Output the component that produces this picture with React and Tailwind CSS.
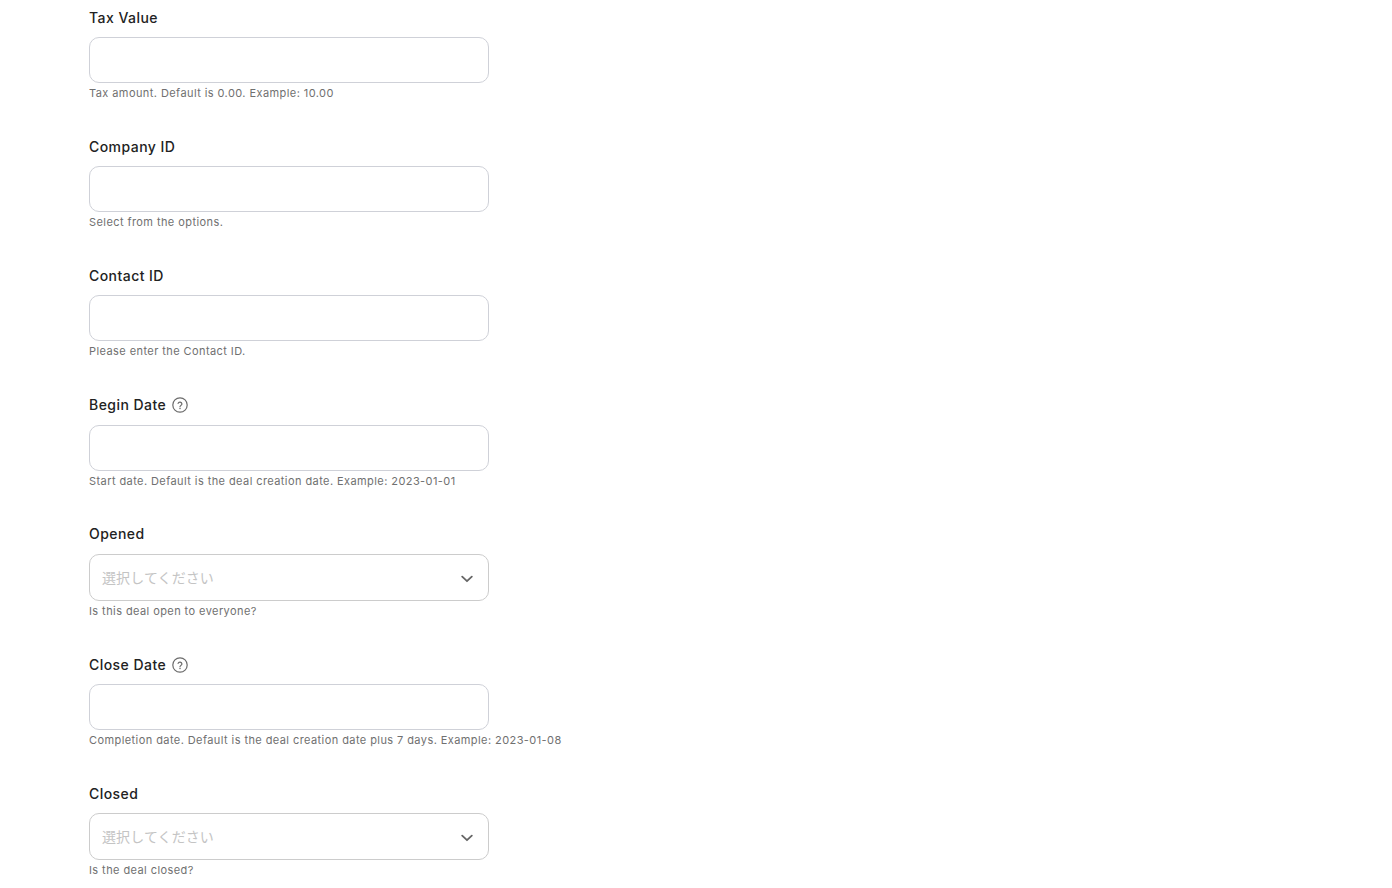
const fields = [
  { label: 'Tax Value', hint: 'Tax amount. Default is 0.00. Example: 10.00' },
  { label: 'Company ID', hint: 'Select from the options.' },
  { label: 'Contact ID', hint: 'Please enter the Contact ID.' },
  { label: 'Begin Date', help: true, rowClass: 'h-5 mb-[10px]', fieldClass: 'mb-[35px]', hint: 'Start date. Default is the deal creation date. Example: 2023-01-01' },
  { label: 'Opened', select: true, rowClass: 'h-5 mb-[10px]', hint: 'Is this deal open to everyone?' },
  { label: 'Close Date', help: true, hint: 'Completion date. Default is the deal creation date plus 7 days. Example: 2023-01-08' },
  { label: 'Closed', select: true, hint: 'Is the deal closed?' },
];

function HelpIcon() {
  return (
    <svg width="16" height="16" viewBox="0 0 16 16" fill="none" className="ml-[6px] text-[#6b6b6b]">
      <circle cx="8" cy="8" r="7.2" stroke="currentColor" strokeWidth="1.2" />
      <path d="M6.1 6.4a1.95 1.95 0 0 1 3.8.5c0 1.3-1.9 1.6-1.9 2.8" stroke="currentColor" strokeWidth="1.2" strokeLinecap="round" />
      <circle cx="8" cy="11.6" r="0.75" fill="currentColor" />
    </svg>
  );
}

function Chevron() {
  return (
    <svg width="12" height="8" viewBox="0 0 12 8" fill="none" className="mt-[2px] text-[#666666]">
      <path d="M1.2 1.6 6 6.2l4.8-4.6" stroke="currentColor" strokeWidth="1.8" strokeLinecap="round" strokeLinejoin="round" />
    </svg>
  );
}

function Field({ label, help, select, hint, rowClass, fieldClass }) {
  return (
    <div className={fieldClass || 'mb-[36px]'}>
      <div className={`flex items-center text-sm leading-5 tracking-[0.45px] font-[450] text-[#222222] ${rowClass || 'h-5 mb-[9px]'}`}>
        {label}
        {help && <HelpIcon />}
      </div>
      {select ? (
        <div className="flex items-center justify-between w-[400px] h-[47px] pl-[12px] pr-[15px] rounded-[10px] border border-[#cccccc] bg-white">
          <span className="text-sm tracking-[0.1px] text-[#c4c4c4]">選択してください</span>
          <Chevron />
        </div>
      ) : (
        <input className="block w-[400px] h-[46px] rounded-[10px] border border-[#cfd1d8] bg-white" />
      )}
      <p className="mt-[2px] text-[11px] leading-4 tracking-[0.42px] text-[#707070]">{hint}</p>
    </div>
  );
}

export default function App() {
  return (
    <div className="h-[888px] overflow-hidden bg-white pl-[89px] pt-[8px] font-['Inter','Noto_Sans_CJK_JP',sans-serif]">
      {fields.map((f) => (
        <Field key={f.label} {...f} />
      ))}
    </div>
  );
}
